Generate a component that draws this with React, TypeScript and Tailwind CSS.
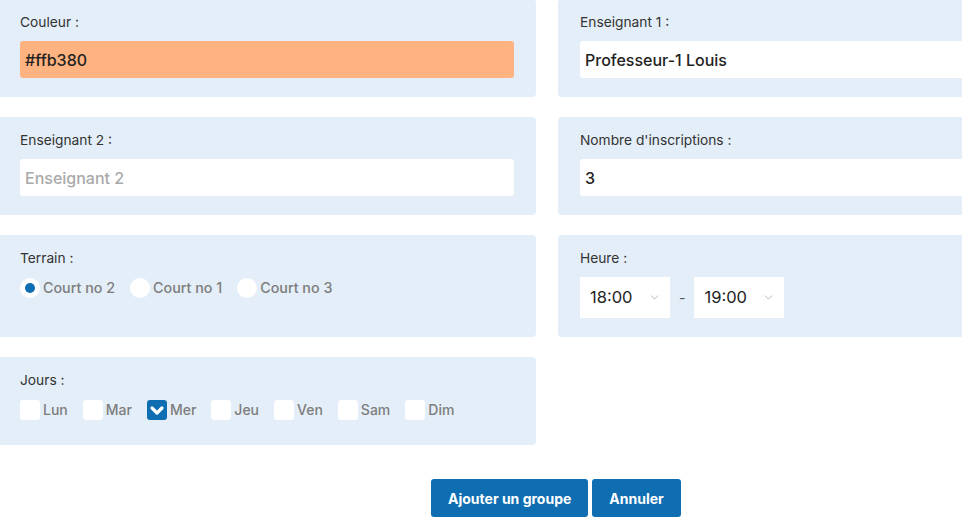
import { ChevronDown } from "lucide-react";

const font = { fontFamily: "Inter, 'Noto Sans', sans-serif" };

function Card({ label, children }: { label: string; children: React.ReactNode }) {
  return (
    <div className="rounded-[4px] bg-[#e3eef8] px-[22px] pt-[13px] pb-[19px]">
      <div className="mb-[9px] h-5 text-[13.75px] leading-5 text-[#333]">{label}</div>
      {children}
    </div>
  );
}

function Field({ value, placeholder, bg }: { value?: string; placeholder?: string; bg?: string }) {
  return (
    <div
      className={`flex h-[37px] items-center rounded-[3px] px-[5px] text-[16px] font-medium ${bg ?? "bg-white"} ${value ? "text-[#222]" : "text-[#a9a9a9]"}`}
    >
      {value ?? placeholder}
    </div>
  );
}

function Radio({ label, checked }: { label: string; checked?: boolean }) {
  return (
    <div className="mr-[15px] flex items-center">
      <span className="flex h-5 w-5 items-center justify-center rounded-full bg-white">
        {checked && <span className="-ml-[1px] h-[10px] w-[10px] rounded-full bg-[#0f6eb2]" />}
      </span>
      <span className="ml-[3px] text-[14.3px] font-medium text-[#7d7d7d]">{label}</span>
    </div>
  );
}

function Check({ label, checked }: { label: string; checked?: boolean }) {
  return (
    <div className="mr-[15px] flex items-center">
      <span className={`flex h-5 w-5 items-center justify-center rounded-[3px] ${checked ? "bg-[#0f6eb2]" : "bg-white"}`}>
        {checked && (
          <svg width="20" height="20" viewBox="0 0 20 20">
            <path d="M5 8 L10 13 L15 8" fill="none" stroke="#fff" strokeWidth="3.2" strokeLinecap="round" strokeLinejoin="round" />
          </svg>
        )}
      </span>
      <span className="ml-[3px] text-[14px] font-medium text-[#7d7d7d]">{label}</span>
    </div>
  );
}

function Select({ value }: { value: string }) {
  return (
    <div className="flex h-[41px] w-[90px] items-center justify-between bg-white pl-[10px] pr-[9px] text-[16.5px] text-[#222]">
      <span>{value}</span>
      <ChevronDown size={13} strokeWidth={1.1} className="text-[#888]" />
    </div>
  );
}

export default function App() {
  return (
    <div className="h-[518px] w-[962px] overflow-hidden bg-white" style={font}>
      <div className="-ml-[2px] -mt-[1px] w-[1098px]">
        <div className="grid grid-cols-[538px_538px] gap-x-[22px] gap-y-[20px]">
          <Card label="Couleur :">
            <Field value="#ffb380" bg="bg-[#ffb380]" />
          </Card>
          <Card label="Enseignant 1 :">
            <Field value="Professeur-1 Louis" />
          </Card>
          <Card label="Enseignant 2 :">
            <Field placeholder="Enseignant 2" />
          </Card>
          <Card label="Nombre d'inscriptions :">
            <Field value="3" />
          </Card>
          <Card label="Terrain :">
            <div className="flex">
              <Radio label="Court no 2" checked />
              <Radio label="Court no 1" />
              <Radio label="Court no 3" />
            </div>
          </Card>
          <Card label="Heure :">
            <div className="flex items-center">
              <Select value="18:00" />
              <span className="mx-[9px] text-[14px] text-[#555]">-</span>
              <Select value="19:00" />
            </div>
          </Card>
          <Card label="Jours :">
            <div className="flex h-[27px] items-start">
              <Check label="Lun" />
              <Check label="Mar" />
              <Check label="Mer" checked />
              <Check label="Jeu" />
              <Check label="Ven" />
              <Check label="Sam" />
              <Check label="Dim" />
            </div>
          </Card>
        </div>
        <div className="mt-[34px] flex gap-1 pl-[433px]">
          <button className="h-[38px] rounded-[3px] bg-[#0f6eb2] px-[17px] text-[14px] font-bold text-white">Ajouter un groupe</button>
          <button className="h-[38px] rounded-[3px] bg-[#0f6eb2] px-[17px] text-[14px] font-bold text-white">Annuler</button>
        </div>
      </div>
    </div>
  );
}
